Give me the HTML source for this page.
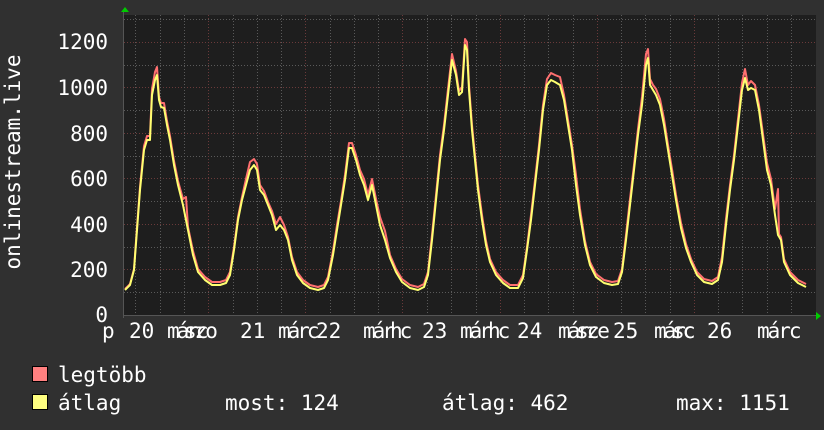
<!DOCTYPE html>
<html><head><meta charset="utf-8"><style>
html,body{margin:0;padding:0;background:#303030;}
svg{display:block}
text{font-family:"DejaVu Sans Mono","Liberation Mono",monospace;fill:#fff}
</style></head><body>
<svg width="824" height="430" viewBox="0 0 824 430" xmlns="http://www.w3.org/2000/svg">
<rect width="824" height="430" fill="#303030"/>
<rect x="124" y="15" width="692" height="300" fill="#1e1e1e"/>
<g stroke="#5a5a5a" stroke-width="1" stroke-dasharray="1,2">
<line x1="124" x2="816" y1="292.5" y2="292.5"/><line x1="124" x2="816" y1="247.5" y2="247.5"/>
<line x1="124" x2="816" y1="201.5" y2="201.5"/><line x1="124" x2="816" y1="156.5" y2="156.5"/>
<line x1="124" x2="816" y1="110.5" y2="110.5"/><line x1="124" x2="816" y1="65.5" y2="65.5"/>
<line x1="124" x2="816" y1="19.5" y2="19.5"/>
</g>
<g stroke="#6a3a3a" stroke-width="1" stroke-dasharray="1,2">
<line x1="124" x2="816" y1="269.5" y2="269.5"/><line x1="124" x2="816" y1="224.5" y2="224.5"/>
<line x1="124" x2="816" y1="178.5" y2="178.5"/><line x1="124" x2="816" y1="133.5" y2="133.5"/>
<line x1="124" x2="816" y1="87.5" y2="87.5"/><line x1="124" x2="816" y1="42.5" y2="42.5"/>
</g>
<g stroke="#5a5a5a" stroke-dasharray="1,2">
<line x1="135.5" x2="135.5" y1="15" y2="315"/><line x1="160.5" x2="160.5" y1="15" y2="315"/><line x1="184.5" x2="184.5" y1="15" y2="315"/>
<line x1="233.5" x2="233.5" y1="15" y2="315"/><line x1="257.5" x2="257.5" y1="15" y2="315"/><line x1="281.5" x2="281.5" y1="15" y2="315"/>
<line x1="330.5" x2="330.5" y1="15" y2="315"/><line x1="354.5" x2="354.5" y1="15" y2="315"/><line x1="378.5" x2="378.5" y1="15" y2="315"/>
<line x1="427.5" x2="427.5" y1="15" y2="315"/><line x1="451.5" x2="451.5" y1="15" y2="315"/><line x1="476.5" x2="476.5" y1="15" y2="315"/>
<line x1="524.5" x2="524.5" y1="15" y2="315"/><line x1="548.5" x2="548.5" y1="15" y2="315"/><line x1="573.5" x2="573.5" y1="15" y2="315"/>
<line x1="621.5" x2="621.5" y1="15" y2="315"/><line x1="645.5" x2="645.5" y1="15" y2="315"/><line x1="670.5" x2="670.5" y1="15" y2="315"/>
<line x1="718.5" x2="718.5" y1="15" y2="315"/><line x1="742.5" x2="742.5" y1="15" y2="315"/><line x1="767.5" x2="767.5" y1="15" y2="315"/>
<line x1="791.5" x2="791.5" y1="15" y2="315"/>
</g>
<g stroke="#6a3a3a" stroke-dasharray="1,2">
<line x1="208.5" x2="208.5" y1="15" y2="315"/><line x1="305.5" x2="305.5" y1="15" y2="315"/><line x1="402.5" x2="402.5" y1="15" y2="315"/>
<line x1="500.5" x2="500.5" y1="15" y2="315"/><line x1="597.5" x2="597.5" y1="15" y2="315"/><line x1="694.5" x2="694.5" y1="15" y2="315"/>
</g>
<line x1="124" y1="315.5" x2="816" y2="315.5" stroke="#555"/>
<line x1="123.5" y1="12" x2="123.5" y2="318" stroke="#555"/>
<polygon points="121,12 125,7 129,12" fill="#00cc00"/>
<polygon points="816,312 821,316 816,320" fill="#00cc00"/>
<g fill="none" stroke-linejoin="round" stroke-width="2">
<polyline stroke="#ff7070" transform="translate(0,-1)" points="125,290 130,285 134,270 137,228 140,188 144,147 147,137 150,137 152,90 155,73 157,68 159,98 161,104 164,104 167,122 170,137 174,162 178,182 183,200 186,198 188,228 193,252 198,270 205,278 212,283 220,283 226,281 230,273 234,248 238,218 242,198 246,180 250,163 254,160 257,165 260,186 264,192 268,203 272,212 276,225 280,218 284,226 288,238 292,258 297,273 303,281 310,286 318,288 324,286 328,278 333,252 337,226 341,202 345,176 349,144 352,144 356,156 360,171 364,180 368,196 372,180 376,200 380,218 385,232 390,256 396,270 402,280 410,286 418,288 424,285 428,273 432,236 436,196 440,156 444,126 448,90 452,55 456,72 459,92 462,88 465,40 467,43 469,86 472,126 475,156 478,186 482,216 486,242 490,260 496,273 503,281 510,286 518,286 523,276 527,248 531,216 535,181 539,146 543,106 547,80 551,74 555,76 560,78 564,96 568,121 572,146 576,176 580,210 585,242 590,263 596,275 604,281 612,283 618,282 622,270 626,236 630,200 634,166 638,130 642,98 646,55 648,50 650,80 653,86 656,90 660,100 664,120 668,146 672,170 676,196 681,224 686,245 691,260 697,273 704,280 712,282 718,278 722,258 726,220 730,186 734,156 738,120 742,84 745,70 748,86 751,82 755,86 759,106 763,135 767,164 771,180 775,210 778,190 779,235 781,238 784,260 790,273 798,281 806,285"/>
<polyline stroke="#ffff70" points="125,290 130,285 134,270 137,230 140,190 144,150 147,140 150,140 152,95 155,80 157,75 159,100 161,107 164,108 167,125 170,140 174,165 178,185 183,205 188,230 193,255 198,272 205,280 212,285 220,285 226,283 230,275 234,250 238,220 242,200 246,185 250,170 254,165 257,170 260,190 264,195 268,205 272,215 276,230 280,225 284,230 288,240 292,260 297,275 303,283 310,288 318,290 324,288 328,280 333,255 337,230 341,205 345,180 349,148 352,148 356,160 360,175 364,185 368,200 372,185 376,205 380,225 385,240 390,258 396,272 402,282 410,288 418,290 424,287 428,275 432,240 436,200 440,160 444,130 448,95 452,60 456,75 459,95 462,92 465,45 467,50 469,90 472,130 475,160 478,190 482,220 486,245 490,262 496,275 503,283 510,288 518,288 523,278 527,250 531,220 535,185 539,150 543,110 547,85 551,80 555,82 560,85 564,100 568,125 572,150 576,185 580,215 585,245 590,265 596,277 604,283 612,285 618,284 622,272 626,240 630,205 634,170 638,135 642,105 646,65 648,58 650,85 653,90 656,95 660,105 664,125 668,150 672,175 676,200 681,228 686,248 691,262 697,275 704,282 712,284 718,280 722,262 726,225 730,190 734,160 738,125 742,90 745,78 748,90 751,88 755,90 759,110 763,140 767,170 771,185 775,215 778,235 781,240 784,262 790,275 798,283 806,287"/>
</g>
<g font-size="21" text-anchor="end">
<text x="108" y="49">1200</text><text x="108" y="95">1000</text><text x="108" y="141">800</text>
<text x="108" y="186">600</text><text x="108" y="232">400</text><text x="108" y="277">200</text><text x="108" y="322">0</text>
</g>
<text transform="translate(20,162) rotate(-90)" font-size="21" text-anchor="middle">onlinestream.live</text>
<g font-size="21">
<text x="102" y="338">p</text>
<text x="129" y="338">20</text><text x="167" y="338" letter-spacing="-3">márc</text><text x="184" y="338" letter-spacing="-2">szo</text>
<text x="240" y="338">21</text><text x="278" y="338" letter-spacing="-3">márc</text><text x="316" y="338">22</text>
<text x="363" y="338" letter-spacing="-3">már</text><text x="390" y="338" letter-spacing="-3">hc</text>
<text x="422" y="338">23</text><text x="460" y="338" letter-spacing="-3">már</text><text x="488" y="338" letter-spacing="-3">hc</text>
<text x="517" y="338">24</text><text x="558" y="338" letter-spacing="-3">márc</text><text x="576" y="338" letter-spacing="-2">sze</text>
<text x="613" y="338">25</text><text x="654" y="338" letter-spacing="-3">márc</text><text x="672" y="338" letter-spacing="-2">sc</text>
<text x="707" y="338">26</text><text x="757" y="338" letter-spacing="-2">márc</text>
</g>
<rect x="32.5" y="366.5" width="15" height="15" fill="#ff8080" stroke="#000"/>
<rect x="32.5" y="394.5" width="15" height="15" fill="#ffff80" stroke="#000"/>
<g font-size="21">
<text x="58" y="382">legtöbb</text>
<text x="58" y="410">átlag</text>
<text x="225" y="410">most: 124</text>
<text x="442" y="410">átlag: 462</text>
<text x="676" y="410">max: 1151</text>
</g>
</svg>
</body></html>
